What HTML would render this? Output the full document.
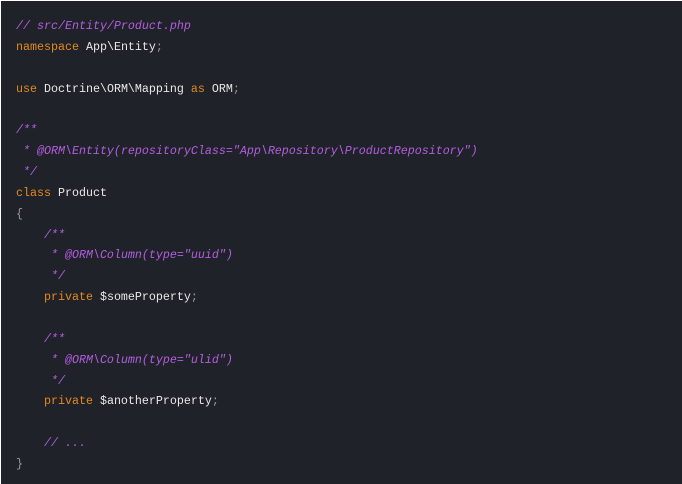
<!DOCTYPE html>
<html><head><meta charset="utf-8"><style>
html,body{margin:0;padding:0;background:#fff;}
.box{position:absolute;left:1px;top:1px;width:681px;height:483px;background:#1f2228;}
pre{margin:0;position:absolute;left:15px;top:15px;font-family:"Liberation Mono",monospace;font-size:11.67px;line-height:20.86px;color:#e8e8e8;}
.k{color:#e5891f}.c{color:#b45ee0;font-style:italic}.p{color:#9a9a9a}
</style></head><body><div class="box"><pre><span class="c">// src/Entity/Product.php</span>
<span class="k">namespace</span> App\Entity<span class="p">;</span>

<span class="k">use</span> Doctrine\ORM\Mapping <span class="k">as</span> ORM<span class="p">;</span>

<span class="c">/**
 * @ORM\Entity(repositoryClass="App\Repository\ProductRepository")
 */</span>
<span class="k">class</span> Product
<span class="p">{</span>
    <span class="c">/**
     * @ORM\Column(type="uuid")
     */</span>
    <span class="k">private</span> $someProperty<span class="p">;</span>

    <span class="c">/**
     * @ORM\Column(type="ulid")
     */</span>
    <span class="k">private</span> $anotherProperty<span class="p">;</span>

    <span class="c">// ...</span>
<span class="p">}</span></pre></div></body></html>
